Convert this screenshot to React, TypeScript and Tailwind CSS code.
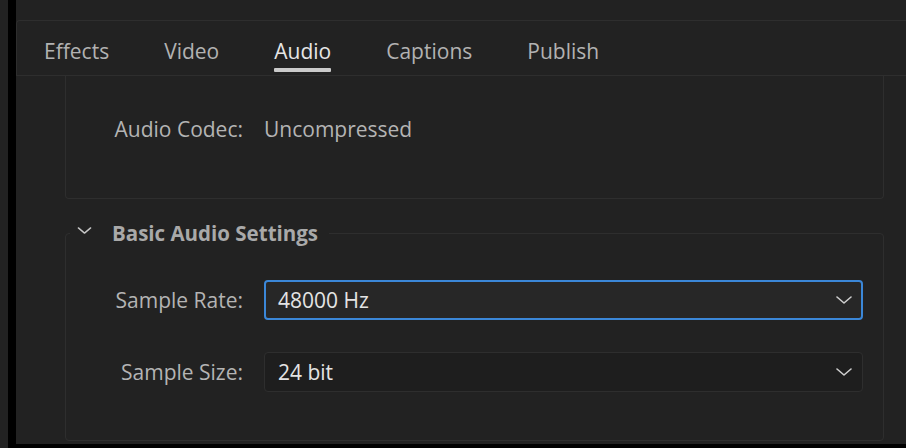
import React from "react";

const tabs = ["Effects", "Video", "Audio", "Captions", "Publish"];

function Chevron({ className }: { className?: string }) {
  return (
    <svg viewBox="0 0 16 8" fill="none" className={className}>
      <path d="M1 1 L8 7 L15 1" stroke="currentColor" strokeWidth="1.6" strokeLinecap="round" strokeLinejoin="round" />
    </svg>
  );
}

function Dropdown({ value, focused }: { value: string; focused?: boolean }) {
  return (
    <div
      className={`flex-1 h-[40px] flex items-center justify-between rounded-[4px] ${
        focused ? "border-2 border-[#3b87d8] bg-[#272727] pl-[12px] pr-[9px]" : "border border-[#2e2e2e] bg-[#1e1e1e] pl-[13px] pr-[10px]"
      }`}
    >
      <span className="text-[21px] leading-[28px] font-medium text-[#e4e4e4]">{value}</span>
      <Chevron className="w-[16px] h-[8px] text-[#cfcfcf]" />
    </div>
  );
}

export default function App() {
  return (
    <div
      className="w-[906px] h-[448px] bg-[#222222] flex overflow-hidden"
      style={{ fontFamily: '"Open Sans", "Liberation Sans", sans-serif' }}
    >
      <div className="w-[8px] shrink-0" />
      <div className="w-[8px] shrink-0 bg-black" />

      <div className="flex-1 flex flex-col">
        <div className="h-[20px] shrink-0" />

        {/* tab bar */}
        <div className="h-[56px] shrink-0 border-y border-l border-[#2e2e2e] rounded-tl-[4px] flex gap-[55px] pl-[27px]">
          {tabs.map((t) => {
            const active = t === "Audio";
            return (
              <div key={t} className="flex flex-col pt-[16px]">
                <span className={`text-[21px] leading-[28px] font-medium ${active ? "text-[#e6e6e6]" : "text-[#b2b2b2]"}`}>{t}</span>
                <div className={`mt-[3px] h-[4px] rounded-[1px] ${active ? "bg-[#cacaca]" : ""}`} />
              </div>
            );
          })}
        </div>

        {/* codec box */}
        <div className="ml-[49px] mr-[22px] h-[123px] shrink-0 border-x border-b border-[#2e2e2e] rounded-b-[4px] flex items-start pt-[39px]">
          <span className="w-[177px] text-right text-[21px] leading-[28px] font-medium text-[#b4b4b4]">Audio Codec:</span>
          <span className="ml-[21px] text-[21px] leading-[28px] font-medium text-[#b4b4b4]">Uncompressed</span>
        </div>

        {/* basic audio settings */}
        <fieldset className="ml-[49px] mr-[22px] mt-[20px] border border-[#2e2e2e] rounded-[4px] pr-[20px] pb-[48px]">
          <legend className="ml-[4px] px-[7px] flex items-center">
            <Chevron className="w-[15px] h-[7px] mb-[5px] text-[#c6c6c6]" />
            <span className="ml-[20px] pr-[4px] text-[20.5px] leading-[28px] font-bold text-[#a9a9a9]">Basic Audio Settings</span>
          </legend>

          <div className="mt-[33px] flex items-center">
            <span className="w-[177px] text-right text-[21px] leading-[28px] font-medium text-[#b4b4b4]">Sample Rate:</span>
            <div className="ml-[21px] flex-1 flex">
              <Dropdown value="48000 Hz" focused />
            </div>
          </div>

          <div className="mt-[32px] flex items-center">
            <span className="w-[177px] text-right text-[21px] leading-[28px] font-medium text-[#b4b4b4]">Sample Size:</span>
            <div className="ml-[21px] flex-1 flex">
              <Dropdown value="24 bit" />
            </div>
          </div>
        </fieldset>

        <div className="flex-1" />
        <div className="h-[4px] shrink-0 bg-black" />
      </div>
    </div>
  );
}
